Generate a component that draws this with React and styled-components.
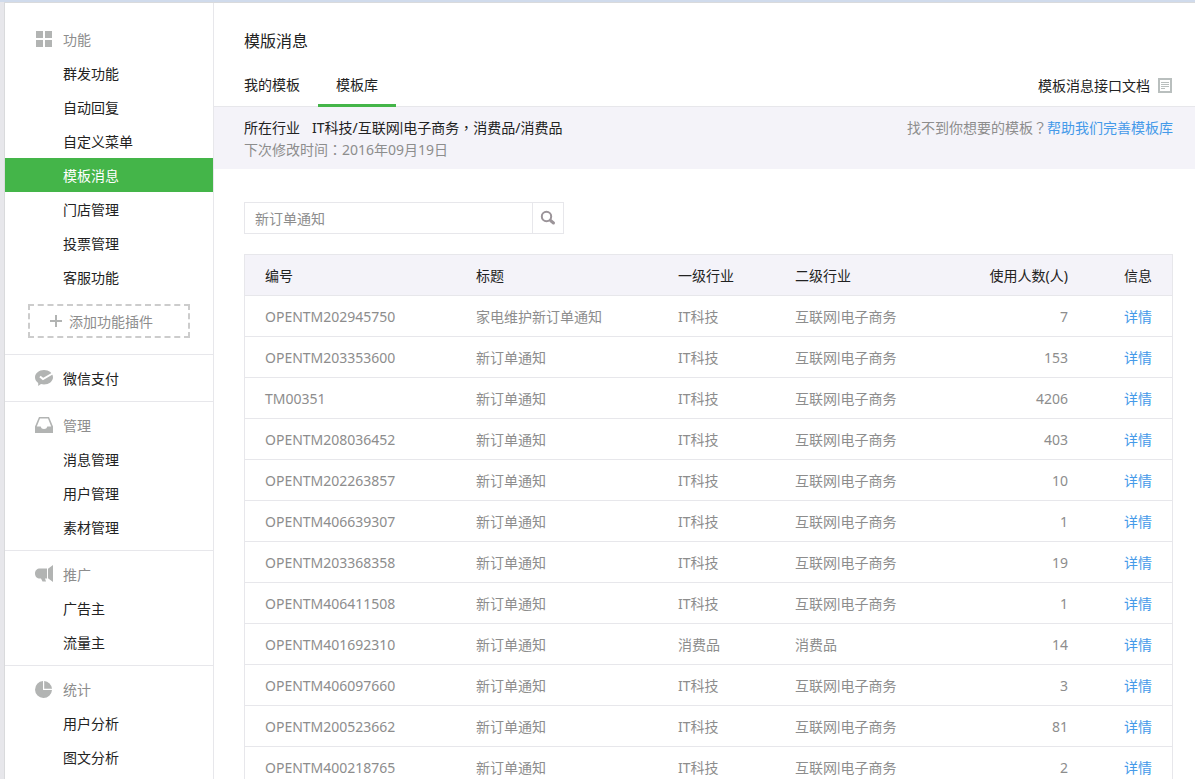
import React, { useState } from 'react';
import styled, { createGlobalStyle } from 'styled-components';

const GlobalStyle = createGlobalStyle`
  * {
    box-sizing: border-box;
  }

  html {
    scrollbar-width: none;
  }

  body {
    margin: 0;
    background-color: #e7e7eb;
    color: #222;
    font-family: "Noto Sans", "Noto Sans CJK SC", sans-serif;
    font-size: 14px;
    line-height: 22px;
  }

  a {
    color: inherit;
    text-decoration: none;
  }
`;

const Page = styled.div`
  min-height: 100vh;
  display: flex;
  flex-direction: column;
  padding-left: 4px;
  border-top: 2px solid #d0dbec;
`;

const Panel = styled.div`
  flex: 1;
  display: flex;
  background-color: #fff;
  border: 1px solid #d9dadc;
  border-width: 1px 0 0 1px;
`;

const Sidebar = styled.nav`
  flex: 0 0 209px;
  padding-top: 13px;
  border-right: 1px solid #e7e7eb;
`;

const MenuGroup = styled.section`
  padding: 6px 0;

  & + & {
    border-top: 1px solid #e7e7eb;
  }
`;

const MenuTitle = styled.h2`
  display: flex;
  align-items: flex-start;
  height: 34px;
  margin: 0;
  padding: 7px 0 0 29px;
  font-size: 14px;
  font-weight: 400;
  color: ${({ $dark }) => ($dark ? '#222' : '#8d8d8d')};

  svg {
    width: 20px;
    height: 20px;
    margin-right: 9px;
    fill: #b2b4b3;
  }
`;

const MenuItem = styled.a`
  display: block;
  height: 34px;
  padding: 7px 0 0 58px;
  background-color: ${({ $active }) => ($active ? '#44b549' : 'transparent')};
  color: ${({ $active }) => ($active ? '#fff' : '#222')};
`;

const AddPlugin = styled.button`
  display: flex;
  align-items: center;
  width: 162px;
  height: 34px;
  margin: 10px 23px;
  padding: 2px 20px 0;
  border: 2px dashed #ccc;
  background: none;
  color: #8d8d8d;
  font: inherit;
  cursor: pointer;

  svg {
    width: 12px;
    height: 12px;
    margin: 0 7px 2px 0;
    fill: #b2b4b3;
  }
`;

const Main = styled.main`
  flex: 1;
  min-width: 0;
`;

const PageTitle = styled.h1`
  margin: 0;
  padding: 26px 30px 22px;
  font-size: 16px;
  font-weight: 400;
  line-height: 24px;
`;

const TabBar = styled.div`
  display: flex;
  justify-content: space-between;
  padding: 0 22px 0 30px;
  border-bottom: 1px solid #e7e7eb;
`;

const Tabs = styled.div`
  display: flex;
  margin-bottom: -1px;
`;

const Tab = styled.button`
  height: 32px;
  padding: 0 18px 10px;
  border: 0;
  border-bottom: 3px solid ${({ $active }) => ($active ? '#44b549' : 'transparent')};
  background: none;
  color: #222;
  font: inherit;
  line-height: 19px;
  cursor: pointer;

  &:first-child {
    padding-left: 0;
  }
`;

const DocLink = styled.a`
  display: flex;
  align-items: center;
  height: 21px;

  svg {
    width: 14px;
    height: 15px;
    margin: 0 1px 0 8px;
  }
`;

const InfoBand = styled.div`
  display: flex;
  justify-content: space-between;
  align-items: flex-start;
  padding: 10px 22px 8px 30px;
  background-color: #f4f3f9;

  p {
    margin: 0;
  }
`;

const Label = styled.span`
  margin-right: 12px;
`;

const Muted = styled.p`
  color: #8d8d8d;
`;

const BlueLink = styled.a`
  color: #459ae9;
`;

const Bar = styled.span`
  font-family: Roboto, sans-serif;
  line-height: 1;
`;

// full-width marks that sit in the middle of their square
const Mark = styled.span`
  font-family: "Noto Sans CJK TC", sans-serif;
  line-height: 1;
`;

const Content = styled.div`
  padding: 33px 22px 30px 30px;
`;

const SearchForm = styled.form`
  display: flex;
  width: 320px;
  height: 32px;
  margin-bottom: 20px;
  border: 1px solid #e7e7eb;
`;

const SearchInput = styled.input`
  flex: 1;
  min-width: 0;
  padding: 2px 10px 0;
  border: 0;
  outline: 0;
  color: #8d8d8d;
  font: inherit;
`;

const SearchButton = styled.button`
  width: 31px;
  padding: 0;
  border: 0;
  border-left: 1px solid #e7e7eb;
  background: none;
  cursor: pointer;

  svg {
    display: block;
    width: 16px;
    height: 16px;
    margin: 0 auto;
  }
`;

const Table = styled.table`
  width: 100%;
  table-layout: fixed;
  border: 1px solid #e7e7eb;
  border-spacing: 0;
`;

const HeadCell = styled.th`
  width: ${({ $width }) => $width || 'auto'};
  height: 41px;
  padding: 2px 20px 0;
  border-bottom: 1px solid #e7e7eb;
  background-color: #f4f3f9;
  font-weight: 400;
  text-align: ${({ $align }) => $align || 'left'};
  white-space: nowrap;
`;

const Cell = styled.td`
  height: 41px;
  padding: 2px 20px 0;
  border-bottom: 1px solid #e7e7eb;
  color: #8d8d8d;
  text-align: ${({ $align }) => $align || 'left'};
  white-space: nowrap;
`;

const GridIcon = () => (
  <svg viewBox="0 0 20 20" aria-hidden="true">
    <path d="M2 2h7v7H2zM11 2h7v7h-7zM2 11h7v7H2zM11 11h7v7h-7z" />
  </svg>
);

const PayIcon = () => (
  <svg viewBox="0 0 20 20" aria-hidden="true">
    <path d="M10 2c5 0 9 3.200 9 7.300s-4 7.200-9 7.200c-1 0-2-.1-3-.4L4.200 18v-3C2.200 13.700 1 11.600 1 9.300c0-4 4-7.300 9-7.300z" />
    <path d="M6 8.500l3 2.600L18.500 5.500" fill="none" stroke="#fff" strokeWidth="2" />
  </svg>
);

const InboxIcon = () => (
  <svg viewBox="0 0 20 20" aria-hidden="true">
    <path
      fillRule="evenodd"
      d="M5 2h10l4 9.500V18H1v-6.500zM6 3.500L2.800 11.500H6.500c.3 0 .5.200.5.500 0 1.200 1.300 2 3 2s3-.8 3-2c0-.3.200-.5.500-.5h3.700L14 3.500z"
    />
  </svg>
);

const HornIcon = () => (
  <svg viewBox="0 0 20 20" aria-hidden="true">
    <path d="M6 4.500h7v10h-2l1 3H8.500L7 14.500H6c-3 0-5-2-5-5s2-5 5-5zM14 4.800L19 1v17l-5-3.700z" />
  </svg>
);

const PieIcon = () => (
  <svg viewBox="0 0 20 20" aria-hidden="true">
    <path d="M9 2v9h9A8.500 8.500 0 1 1 9 2z" />
    <path d="M10.200 2A8.500 8.500 0 0 1 18 9.800h-7.800z" />
  </svg>
);

const PlusIcon = () => (
  <svg viewBox="0 0 12 12" aria-hidden="true">
    <path d="M5 0h2v5h5v2H7v5H5V7H0V5h5z" />
  </svg>
);

const DocIcon = () => (
  <svg viewBox="0 0 14 15" fill="none" stroke="#b9bfbe" aria-hidden="true">
    <path d="M1 1h12v13H1z" strokeWidth="2" />
    <path d="M3 4.500h8M3 6.500h8M3 8.500h8M3 10.500h4" />
  </svg>
);

const SearchIcon = () => (
  <svg viewBox="0 0 16 16" fill="none" stroke="#9b9499" aria-hidden="true">
    <circle cx="6.500" cy="6.500" r="4.700" strokeWidth="2" />
    <path d="M10.500 10.500l3 2.500" strokeWidth="3" strokeLinecap="round" />
  </svg>
);

const menu = [
  {
    title: '功能',
    icon: <GridIcon />,
    items: ['群发功能', '自动回复', '自定义菜单', '模板消息', '门店管理', '投票管理', '客服功能'],
    addPlugin: true,
  },
  { title: '微信支付', icon: <PayIcon />, items: [], link: true },
  { title: '管理', icon: <InboxIcon />, items: ['消息管理', '用户管理', '素材管理'] },
  { title: '推广', icon: <HornIcon />, items: ['广告主', '流量主'] },
  { title: '统计', icon: <PieIcon />, items: ['用户分析', '图文分析'] },
];

const ecommerce = (
  <>
    互联网<Bar>|</Bar>电子商务
  </>
);

const tech = ['IT科技', ecommerce];
const goods = ['消费品', '消费品'];

const templates = [
  { id: 'OPENTM202945750', title: '家电维护新订单通知', industry: tech, users: 7 },
  { id: 'OPENTM203353600', title: '新订单通知', industry: tech, users: 153 },
  { id: 'TM00351', title: '新订单通知', industry: tech, users: 4206 },
  { id: 'OPENTM208036452', title: '新订单通知', industry: tech, users: 403 },
  { id: 'OPENTM202263857', title: '新订单通知', industry: tech, users: 10 },
  { id: 'OPENTM406639307', title: '新订单通知', industry: tech, users: 1 },
  { id: 'OPENTM203368358', title: '新订单通知', industry: tech, users: 19 },
  { id: 'OPENTM406411508', title: '新订单通知', industry: tech, users: 1 },
  { id: 'OPENTM401692310', title: '新订单通知', industry: goods, users: 14 },
  { id: 'OPENTM406097660', title: '新订单通知', industry: tech, users: 3 },
  { id: 'OPENTM200523662', title: '新订单通知', industry: tech, users: 81 },
  { id: 'OPENTM400218765', title: '新订单通知', industry: tech, users: 2 },
];

const App = () => {
  const [activeTab, setActiveTab] = useState('模板库');
  const [keyword, setKeyword] = useState('新订单通知');

  return (
    <>
      <GlobalStyle />
      <Page>
        <Panel>
          <Sidebar>
            {menu.map((group) => (
              <MenuGroup key={group.title}>
                <MenuTitle $dark={group.link}>
                  {group.icon}
                  {group.link ? <a href="#pay">{group.title}</a> : group.title}
                </MenuTitle>
                {group.items.map((item) => (
                  <MenuItem key={item} href="#menu" $active={item === '模板消息'}>
                    {item}
                  </MenuItem>
                ))}
                {group.addPlugin && (
                  <AddPlugin type="button">
                    <PlusIcon />
                    添加功能插件
                  </AddPlugin>
                )}
              </MenuGroup>
            ))}
          </Sidebar>

          <Main>
            <PageTitle>模版消息</PageTitle>
            <TabBar>
              <Tabs>
                {['我的模板', '模板库'].map((tab) => (
                  <Tab
                    key={tab}
                    type="button"
                    $active={tab === activeTab}
                    onClick={() => setActiveTab(tab)}
                  >
                    {tab}
                  </Tab>
                ))}
              </Tabs>
              <DocLink href="#doc">
                模板消息接口文档
                <DocIcon />
              </DocLink>
            </TabBar>

            <InfoBand>
              <div>
                <p>
                  <Label>所在行业</Label>
                  IT科技/{ecommerce}
                  <Mark>，</Mark>消费品/消费品
                </p>
                <Muted>
                  下次修改时间<Mark>：</Mark>2016年09月19日
                </Muted>
              </div>
              <Muted>
                找不到你想要的模板<Mark>？</Mark>
                <BlueLink href="#help">帮助我们完善模板库</BlueLink>
              </Muted>
            </InfoBand>

            <Content>
              <SearchForm onSubmit={(e) => e.preventDefault()}>
                <SearchInput
                  type="text"
                  aria-label="搜索"
                  value={keyword}
                  onChange={(e) => setKeyword(e.target.value)}
                />
                <SearchButton type="submit" aria-label="搜索">
                  <SearchIcon />
                </SearchButton>
              </SearchForm>

              <Table>
                <thead>
                  <tr>
                    <HeadCell $width="211px">编号</HeadCell>
                    <HeadCell>标题</HeadCell>
                    <HeadCell $width="117px">一级行业</HeadCell>
                    <HeadCell $width="160px">二级行业</HeadCell>
                    <HeadCell $width="153px" $align="right">使用人数(人)</HeadCell>
                    <HeadCell $width="84px" $align="right">信息</HeadCell>
                  </tr>
                </thead>
                <tbody>
                  {templates.map((template) => (
                    <tr key={template.id}>
                      <Cell>{template.id}</Cell>
                      <Cell>{template.title}</Cell>
                      <Cell>{template.industry[0]}</Cell>
                      <Cell>{template.industry[1]}</Cell>
                      <Cell $align="right">{template.users}</Cell>
                      <Cell $align="right">
                        <BlueLink href="#detail">详情</BlueLink>
                      </Cell>
                    </tr>
                  ))}
                </tbody>
              </Table>
            </Content>
          </Main>
        </Panel>
      </Page>
    </>
  );
};

export default App;
